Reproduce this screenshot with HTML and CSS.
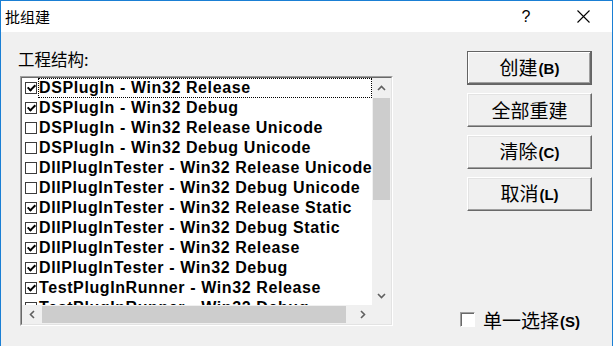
FILE: index.html
```html
<!DOCTYPE html>
<html>

    <head>
        <title>批组建</title>
        <link rel="stylesheet" href="styles.css">
    </head>

    <body>
        <div class="window">
            <div class="titlebar">
                <span class="title">批组建</span>
                <span class="help">?</span>
                <span class="close">
                    <svg width="13" height="13" viewBox="0 0 13 13">
                        <path d="M0.5 0.5 L12.5 12.5 M12.5 0.5 L0.5 12.5" stroke="#000" stroke-width="1.1" fill="none"/>
                    </svg>
                </span>
            </div>

            <div class="main">
                <div class="left">
                    <div class="label">工程结构:</div>
                    <div class="list">
                        <div class="list-inner">
                            <div class="viewport">
                                <div class="row"><span class="cb on"></span><span class="name focus">DSPlugIn - Win32 Release</span></div>
                                <div class="row"><span class="cb on"></span><span class="name">DSPlugIn - Win32 Debug</span></div>
                                <div class="row"><span class="cb"></span><span class="name">DSPlugIn - Win32 Release Unicode</span></div>
                                <div class="row"><span class="cb"></span><span class="name">DSPlugIn - Win32 Debug Unicode</span></div>
                                <div class="row"><span class="cb"></span><span class="name">DllPlugInTester - Win32 Release Unicode</span></div>
                                <div class="row"><span class="cb"></span><span class="name">DllPlugInTester - Win32 Debug Unicode</span></div>
                                <div class="row"><span class="cb on"></span><span class="name">DllPlugInTester - Win32 Release Static</span></div>
                                <div class="row"><span class="cb on"></span><span class="name">DllPlugInTester - Win32 Debug Static</span></div>
                                <div class="row"><span class="cb on"></span><span class="name">DllPlugInTester - Win32 Release</span></div>
                                <div class="row"><span class="cb on"></span><span class="name">DllPlugInTester - Win32 Debug</span></div>
                                <div class="row"><span class="cb on"></span><span class="name">TestPlugInRunner - Win32 Release</span></div>
                                <div class="row"><span class="cb"></span><span class="name">TestPlugInRunner - Win32 Debug</span></div>
                            </div>

                            <div class="vscroll">
                                <div class="arrow">
                                    <svg width="9" height="6" viewBox="0 0 9 6"><path d="M1 5 L4.5 1.5 L8 5" stroke="#606060" stroke-width="1.6" fill="none"/></svg>
                                </div>
                                <div class="vthumb"></div>
                                <div class="spacer"></div>
                                <div class="arrow">
                                    <svg width="9" height="6" viewBox="0 0 9 6"><path d="M1 1 L4.5 4.5 L8 1" stroke="#606060" stroke-width="1.6" fill="none"/></svg>
                                </div>
                            </div>

                            <div class="hscroll">
                                <div class="arrow">
                                    <svg width="6" height="9" viewBox="0 0 6 9"><path d="M5 1 L1.5 4.5 L5 8" stroke="#606060" stroke-width="1.6" fill="none"/></svg>
                                </div>
                                <div class="hthumb"></div>
                                <div class="spacer"></div>
                                <div class="arrow">
                                    <svg width="6" height="9" viewBox="0 0 6 9"><path d="M1 1 L4.5 4.5 L1 8" stroke="#606060" stroke-width="1.6" fill="none"/></svg>
                                </div>
                            </div>

                            <div class="corner"></div>
                        </div>
                    </div>
                </div>

                <div class="right">
                    <button class="btn default">创建<b>(B)</b></button>
                    <button class="btn">全部重建</button>
                    <button class="btn">清除<b>(C)</b></button>
                    <button class="btn">取消<b>(L)</b></button>

                    <label class="single">
                        <span class="box"></span>
                        <span>单一选择<b>(S)</b></span>
                    </label>
                </div>
            </div>
        </div>
    </body>

</html>
```

FILE: styles.css
```css
body {
    margin: 0;
    width: 613px;
    height: 346px;
    overflow: hidden;
    background: #f0f0f0;
    font-family: "Noto Sans CJK SC", "Liberation Sans", sans-serif;
    color: #000;
}

.window {
    height: 346px;
    box-sizing: border-box;
    border: 1px solid #1a7fd4;
    border-bottom: none;
}

.titlebar {
    height: 31px;
    background: #fff;
    display: flex;
    align-items: center;
}

.title {
    flex: 1;
    padding-left: 4px;
    font-size: 15px;
    line-height: 20px;
}

.help {
    width: 56px;
    text-align: center;
    font-family: "Liberation Sans", sans-serif;
    font-size: 16px;
}

.close {
    width: 58px;
    display: flex;
    justify-content: center;
}

.main {
    display: flex;
    align-items: flex-start;
    padding: 17px 0 0 17px;
}

.left {
    width: 375px;
}

.label {
    font-size: 16.5px;
    line-height: 20px;
}

.list {
    margin: 7px 0 0 2px;
    width: 373px;
    height: 250px;
    box-sizing: border-box;
    border: 1px solid;
    border-color: #a0a0a0 #fff #fff #a0a0a0;
}

.list-inner {
    height: 100%;
    box-sizing: border-box;
    border: 1px solid;
    border-color: #696969 #e3e3e3 #e3e3e3 #696969;
    display: grid;
    grid-template-columns: 350px 19px;
    grid-template-rows: 227px 19px;
}

.viewport {
    background: #fff;
    overflow: hidden;
}

.row {
    height: 20px;
    display: flex;
    align-items: center;
    white-space: nowrap;
    font-family: "Liberation Sans", sans-serif;
    font-weight: bold;
    font-size: 16px;
    letter-spacing: 0.6px;
}

.cb {
    position: relative;
    flex: none;
    width: 12px;
    height: 12px;
    box-sizing: border-box;
    margin: 0 1px 0 3px;
    border: 1px solid #3c3c3c;
    background: #fff;
}

.cb.on::after {
    content: "";
    position: absolute;
    left: 3px;
    top: 0px;
    width: 3px;
    height: 6px;
    border: solid #000;
    border-width: 0 2px 2px 0;
    transform: rotate(45deg);
}

.name {
    flex: 1 0 auto;
    height: 20px;
    box-sizing: border-box;
    line-height: 18px;
    border: 1px dotted transparent;
}

.name.focus {
    border-color: #000;
}

.vscroll {
    display: flex;
    flex-direction: column;
    background: #f0f0f0;
}

.hscroll {
    display: flex;
    background: #f0f0f0;
}

.arrow {
    width: 19px;
    height: 19px;
    flex: none;
    display: flex;
    align-items: center;
    justify-content: center;
}

.spacer {
    flex: 1;
}

.vthumb {
    margin: 1px 1px 0 1px;
    height: 102px;
    background: #cdcdcd;
}

.hthumb {
    margin: 1px 0 1px 1px;
    width: 304px;
    background: #cdcdcd;
}

.corner {
    background: #f0f0f0;
}

.right {
    margin-left: 67px;
    padding-top: 2px;
    display: flex;
    flex-direction: column;
    align-items: flex-start;
}

.btn {
    margin: 0 0 8px 7px;
    width: 125px;
    height: 34px;
    padding: 0;
    background: #f0f0f0;
    font-family: "Noto Sans CJK SC", sans-serif;
    font-size: 19px;
    line-height: 24px;
    color: #000;
    border: 1px solid;
    border-color: #fff #696969 #696969 #fff;
    box-shadow: inset -1px -1px #a0a0a0, inset 1px 1px #e3e3e3;
}

.btn.default {
    border-color: #646464;
    box-shadow: inset -1px -1px #696969, inset 1px 1px #fff, inset -2px -2px #a0a0a0;
}

.btn b,
.single b {
    margin-left: 1px;
    font-family: "Liberation Sans", sans-serif;
    font-size: 15px;
    font-weight: bold;
    vertical-align: 1px;
}

.single {
    margin-top: 90px;
    display: flex;
    align-items: center;
    height: 20px;
    font-size: 19px;
    gap: 8px;
}

.box {
    width: 15px;
    height: 15px;
    box-sizing: border-box;
    background: #fff;
    border: 1px solid;
    border-color: #a0a0a0 #fff #fff #a0a0a0;
    box-shadow: inset 1px 1px #696969;
}
```
